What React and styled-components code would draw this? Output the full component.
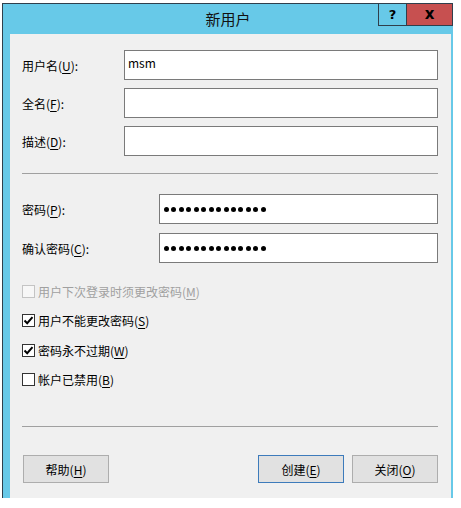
import React from 'react';
import styled, { createGlobalStyle } from 'styled-components';

const Global = createGlobalStyle`
  html, body { margin: 0; padding: 0; background: #ffffff; }
  body {
    width: 461px; height: 508px; overflow: hidden;
    font-family: "Noto Sans CJK SC", "Noto Sans", sans-serif;
    font-size: 12px; color: #000;
  }
`;

const Page = styled.div`
  padding: 3px 0 0 2px;
`;

const Window = styled.div`
  width: 451px;
  box-sizing: border-box;
  background: #67c9e8;
  border-left: 1px solid #2f3f4c;
  border-top: 1px solid #2f3f4c;
`;

const TitleBar = styled.div`
  height: 30px;
  display: grid;
  grid-template-columns: 1fr auto 1fr;
  align-items: start;
`;

const Title = styled.div`
  grid-column: 2;
  line-height: 30px;
  font-size: 15px;
  color: #111;
`;

const Captions = styled.div`
  grid-column: 3;
  justify-self: end;
  display: flex;
  border: 1px solid #2f3f4c;
  border-top: none;
`;

const CaptionButton = styled.div`
  width: ${p => p.$w}px;
  height: 21px;
  display: flex;
  align-items: center;
  justify-content: center;
  background: ${p => (p.$close ? '#c75050' : 'transparent')};
  border-left: ${p => (p.$close ? '1px solid #2f3f4c' : 'none')};
  font-family: "DejaVu Sans", sans-serif;
  font-weight: bold;
  font-size: ${p => (p.$close ? 15 : 13)}px;
  line-height: 1;
  color: #000;
`;

const Client = styled.div`
  margin: 0 2px 7px 7px;
  background: #f0f0f0;
  padding: 16px 13px 15px 12px;
  display: flex;
  flex-direction: column;
`;

const FieldGroup = styled.div`
  display: flex;
  flex-direction: column;
  gap: ${p => p.$gap}px;
`;

const FieldRow = styled.div`
  display: grid;
  grid-template-columns: ${p => p.$label}px 1fr;
  align-items: center;
`;

const Label = styled.div`
  color: ${p => (p.$disabled ? '#a0a0a0' : '#000')};
  white-space: nowrap;
`;

const Key = styled.span`
  text-decoration: underline;
  text-underline-offset: 2px;
`;

const TextBox = styled.div`
  height: 30px;
  box-sizing: border-box;
  border: 1px solid #7a7a7a;
  background: #fff;
  padding: 4px 4px 0 3px;
  line-height: 16px;
`;

const Dots = styled.div`
  display: flex;
  gap: 2.45px;
  padding: 8px 0 0 1px;
`;

const Dot = styled.span`
  width: 5px;
  height: 5px;
  border-radius: 50%;
  background: #000;
`;

const Separator = styled.div`
  height: 1px;
  background: #a0a0a0;
  margin: ${p => p.$m};
`;

const CheckList = styled.div`
  display: flex;
  flex-direction: column;
  gap: 9.5px;
  margin-top: 18px;
`;

const CheckRow = styled.div`
  height: 20px;
  display: flex;
  align-items: center;
  gap: 3px;
`;

const Box = styled.span`
  width: 13px;
  height: 13px;
  box-sizing: border-box;
  border: 1px solid ${p => (p.$disabled ? '#c4c4c4' : '#333')};
  background: ${p => (p.$disabled ? '#f7f7f7' : '#fff')};
  display: flex;
  align-items: center;
  justify-content: center;
`;

const ButtonBar = styled.div`
  display: flex;
  gap: 8px;
  padding-left: 1px;
  margin-top: 28px;
`;

const Button = styled.div`
  width: 86px;
  height: 28px;
  box-sizing: border-box;
  border: 1px solid ${p => (p.$primary ? '#3d7bbb' : '#adadad')};
  background: #e1e1e1;
  display: flex;
  align-items: center;
  justify-content: center;
  margin-right: ${p => (p.$push ? 'auto' : '0')};
`;

const CheckMark = () => (
  <svg width="11" height="11" viewBox="0 0 11 11">
    <polyline points="1.5,5.5 4.2,8.2 9.5,2.2" fill="none" stroke="#000" strokeWidth="2" />
  </svg>
);

const Check = ({ checked, disabled, children }) => (
  <CheckRow>
    <Box $disabled={disabled}>{checked && <CheckMark />}</Box>
    <Label $disabled={disabled}>{children}</Label>
  </CheckRow>
);

const Password = () => (
  <TextBox>
    <Dots>
      {Array.from({ length: 14 }).map((_, i) => (
        <Dot key={i} />
      ))}
    </Dots>
  </TextBox>
);

export default function App() {
  return (
    <>
      <Global />
      <Page>
        <Window>
          <TitleBar>
            <Title>新用户</Title>
            <Captions>
              <CaptionButton $w={27}>?</CaptionButton>
              <CaptionButton $w={45} $close>x</CaptionButton>
            </Captions>
          </TitleBar>
          <Client>
            <FieldGroup $gap={8}>
              <FieldRow $label={102}>
                <Label>用户名(<Key>U</Key>):</Label>
                <TextBox>msm</TextBox>
              </FieldRow>
              <FieldRow $label={102}>
                <Label>全名(<Key>F</Key>):</Label>
                <TextBox />
              </FieldRow>
              <FieldRow $label={102}>
                <Label>描述(<Key>D</Key>):</Label>
                <TextBox />
              </FieldRow>
            </FieldGroup>
            <Separator $m="17px 0 20px" />
            <FieldGroup $gap={9}>
              <FieldRow $label={137}>
                <Label>密码(<Key>P</Key>):</Label>
                <Password />
              </FieldRow>
              <FieldRow $label={137}>
                <Label>确认密码(<Key>C</Key>):</Label>
                <Password />
              </FieldRow>
            </FieldGroup>
            <CheckList>
              <Check disabled>用户下次登录时须更改密码(<Key>M</Key>)</Check>
              <Check checked>用户不能更改密码(<Key>S</Key>)</Check>
              <Check checked>密码永不过期(<Key>W</Key>)</Check>
              <Check>帐户已禁用(<Key>B</Key>)</Check>
            </CheckList>
            <Separator $m="36.5px 0 0" />
            <ButtonBar>
              <Button $push>帮助(<Key>H</Key>)</Button>
              <Button $primary>创建(<Key>E</Key>)</Button>
              <Button>关闭(<Key>O</Key>)</Button>
            </ButtonBar>
          </Client>
        </Window>
      </Page>
    </>
  );
}
